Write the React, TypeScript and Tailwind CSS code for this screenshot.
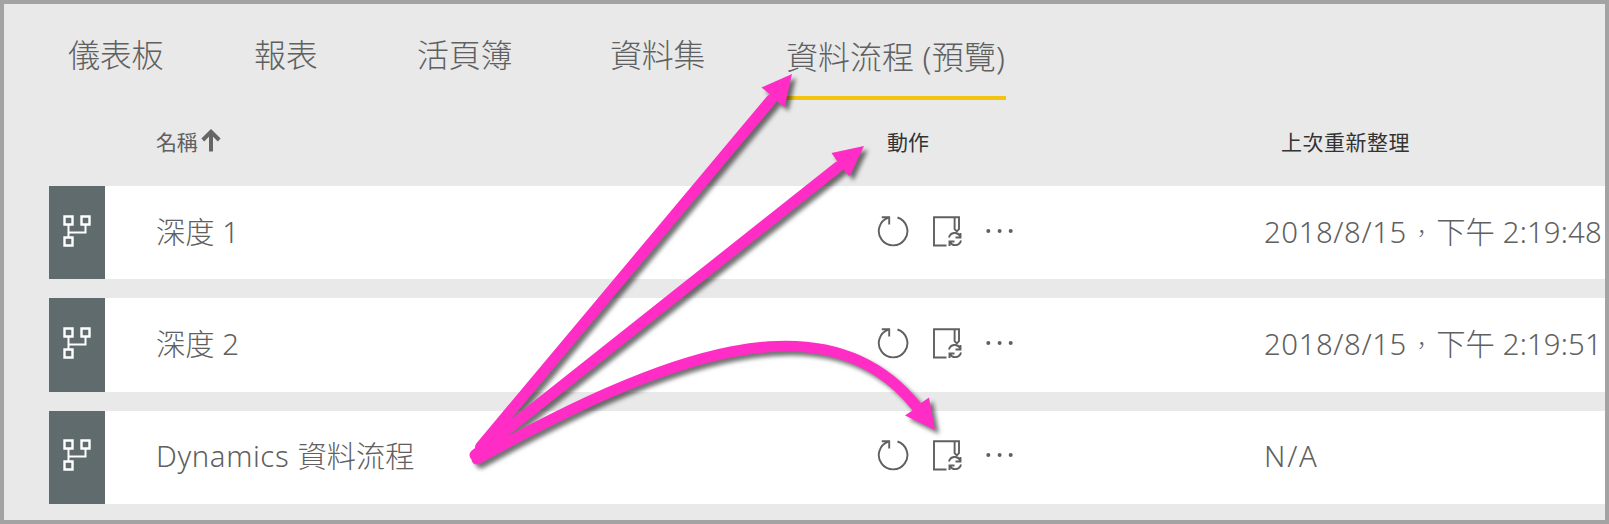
import React from "react";

const tabs = [
  { label: "儀表板", cls: "w-[186px]" },
  { label: "報表", cls: "w-[163px]" },
  { label: "活頁簿", cls: "w-[193px]" },
  { label: "資料集", cls: "w-[176px]" },
];

const rows = [
  { latin: "", name: "深度 1", date: "2018/8/15", time: "2:19:48" },
  { latin: "", name: "深度 2", date: "2018/8/15", time: "2:19:51" },
  { latin: "Dynamics", name: "資料流程", date: "N/A", time: "" },
];

function FlowIcon() {
  return (
    <svg className="h-[34px] w-[30px]" viewBox="0 0 30 34" fill="none" stroke="#fff" strokeWidth="2.400">
      <path d="M2.500 2.500h8v8h-8zM19.500 2.500h8v8h-8zM2.500 23.500h8v8h-8z" />
      <path d="M6.500 10.500v13M6.500 18.500h17v-8" strokeWidth="2" />
    </svg>
  );
}

function RefreshIcon() {
  return (
    <svg className="h-[34px] w-[34px]" viewBox="0 0 34 34" fill="none" stroke="#606060" strokeWidth="1.900">
      <path d="M21.500 3.500A14.300 14.300 0 1 1 12.400 3.600" />
      <path d="M5.800 3.200h7.400v7.200" />
    </svg>
  );
}

function SettingsIcon() {
  return (
    <svg className="h-[34px] w-[34px]" viewBox="0 0 34 34" fill="none" stroke="#606060" strokeWidth="1.900">
      <path d="M15.500 31.500H3V3.200h25v12l-2.200 2.300-2.200-2.300v-12" />
      <path d="M18 23.500a6 6 0 0 1 11-1.500M29.500 19v4.500h-5M30 26.500a6 6 0 0 1-11 1.700M18.500 32v-4.500h5" />
    </svg>
  );
}

function DotsIcon() {
  return (
    <svg className="h-[10px] w-[30px]" viewBox="0 0 30 10" fill="#606060">
      <circle cx="4.300" cy="5" r="2" />
      <circle cx="15.600" cy="5" r="2" />
      <circle cx="26.700" cy="5" r="2" />
    </svg>
  );
}

function Arrows() {
  return (
    <svg
      className="pointer-events-none absolute -top-1 -left-1 h-[524px] w-[1609px] drop-shadow-[4px_4px_2px_rgba(0,0,0,0.55)]"
      viewBox="0 0 1609 524"
      fill="none"
      stroke="#ff2cc5"
      strokeWidth="11"
      strokeLinecap="round"
    >
      <path d="M480.500 447 771 100M475 455 838 167M477 459C660 358 825 292 916 406" />
      <g fill="#ff2cc5" stroke="none">
        <path d="M792 74 784.500 107 776.500 101 769.500 94 761.500 87.500Z" />
        <path d="M864 146 849.500 176.500 843.500 169.500 837 161 831.500 153Z" />
        <path d="M935 430 905 415.500 913 410 921 403 929 397.500Z" />
      </g>
    </svg>
  );
}

export default function App() {
  return (
    <div className="relative h-[524px] w-[1609px] overflow-hidden border-4 border-[#a3a3a3] bg-[#e9e9e9] font-['Noto_Sans','Noto_Sans_CJK_TC',sans-serif] font-light text-[#606060]">
      <nav className="flex h-[96px] pt-[28px] pl-[64px] text-[32px] leading-[46px] whitespace-nowrap">
        {tabs.map((t) => (
          <div key={t.label} className={`tracking-[-0.300px] ${t.cls}`}>
            {t.label}
          </div>
        ))}
        <div className="h-[68px] w-[220px] border-b-4 border-[#f2c30f] pt-[2px]">
          <span>資料流程</span>
          <span className="tracking-[0.200px]"> (預覽)</span>
        </div>
      </nav>
      <div className="flex h-[86px] items-center pl-[152px] text-[21px] font-normal whitespace-nowrap">
        <div className="flex w-[731px] items-center">
          <span className="w-[42px] tracking-[-0.300px]">名稱</span>
          <svg className="mb-[4px] ml-[3px] h-[24px] w-[20px]" viewBox="0 0 20 24" fill="none" stroke="#666" strokeWidth="4">
            <path d="M10 22.500V3M1.800 11 10 2.800 18.200 11" />
          </svg>
        </div>
        <div className="w-[394px] text-[#333]">動作</div>
        <div className="tracking-[0.500px] text-[#333]">上次重新整理</div>
      </div>
      <div className="flex flex-col gap-[19px] pl-[45px] text-[29.300px] whitespace-nowrap">
        {rows.map((r) => (
          <div key={r.latin + r.name} className="flex h-[93.300px] items-center bg-white">
            <div className="flex h-full w-[56px] items-center justify-center bg-[#5f6b6d] pb-[4px]">
              <FlowIcon />
            </div>
            <div className="w-[771px] pl-[51px]">
              {r.latin && <span className="tracking-[0.600px]">{r.latin} </span>}
              {r.name}
            </div>
            <div className="flex w-[388px] items-center pb-[4px]">
              <RefreshIcon />
              <span className="w-[21px]" />
              <SettingsIcon />
              <span className="w-[19px]" />
              <DotsIcon />
            </div>
            <div className="flex">
              <span className={r.time ? "tracking-[0.600px]" : "tracking-[1.800px]"}>{r.date}</span>
              {r.time && (
                <>
                  <span className="flex w-[29.300px] items-center justify-center text-[22px]">，</span>
                  <span className="tracking-[0.150px]">下午 {r.time}</span>
                </>
              )}
            </div>
          </div>
        ))}
      </div>
      <Arrows />
    </div>
  );
}
